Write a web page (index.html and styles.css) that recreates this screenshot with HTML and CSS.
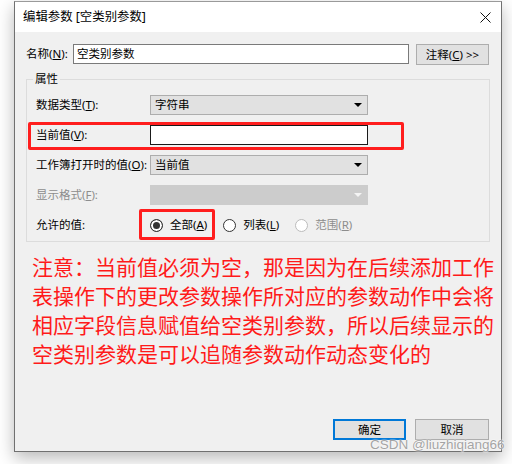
FILE: index.html
```html
<!DOCTYPE html>
<html lang="zh-CN">
<head>
<meta charset="utf-8">
<title>编辑参数</title>
<link rel="stylesheet" href="styles.css">
</head>
<body>
<div class="dialog">
  <div class="titlebar">
    <span class="title">编辑参数 [空类别参数]</span>
    <svg class="close" width="11" height="11" viewBox="0 0 11 11"><path d="M0.5 0.5 L10.5 10.5 M10.5 0.5 L0.5 10.5" stroke="#111" stroke-width="1" fill="none"/></svg>
  </div>
  <div class="body">
    <div class="name-row">
      <span class="name-label">名称(<u>N</u>):</span>
      <div class="textbox name-input">空类别参数</div>
      <button class="btn comment-btn">注释(<u>C</u>) &gt;&gt;</button>
    </div>
    <fieldset class="group">
      <legend>属性</legend>
      <div class="rows">
        <div class="row">
          <span class="lbl">数据类型(<u>T</u>):</span>
          <div class="select"><span>字符串</span><i class="arrow"></i></div>
        </div>
        <div class="row highlight">
          <span class="lbl">当前值(<u>V</u>):</span>
          <div class="textbox value-input"></div>
        </div>
        <div class="row">
          <span class="lbl">工作簿打开时的值(<u>O</u>):</span>
          <div class="select"><span>当前值</span><i class="arrow"></i></div>
        </div>
        <div class="row">
          <span class="lbl disabled">显示格式(<u>F</u>):</span>
          <div class="select disabled"><span></span><i class="arrow"></i></div>
        </div>
        <div class="row">
          <span class="lbl">允许的值:</span>
          <div class="radios">
            <span class="opt opt-all"><i class="radio checked"></i><span>全部(<u>A</u>)</span></span>
            <span class="opt"><i class="radio"></i><span>列表(<u>L</u>)</span></span>
            <span class="opt disabled"><i class="radio"></i><span>范围(<u>R</u>)</span></span>
          </div>
        </div>
      </div>
    </fieldset>
    <p class="note">注意：当前值必须为空，那是因为在后续添加工作<br>表操作下的更改参数操作所对应的参数动作中会将<br>相应字段信息赋值给空类别参数，所以后续显示的<br>空类别参数是可以追随参数动作动态变化的</p>
    <div class="footer">
      <button class="btn ok">确定</button>
      <button class="btn cancel">取消</button>
    </div>
  </div>
</div>
<div class="watermark">CSDN @liuzhiqiang66</div>
</body>
</html>
```
FILE: styles.css
```css
html, body {
  margin: 0;
  padding: 0;
  background: #ffffff;
}
body {
  font-family: "Noto Sans", "Noto Sans CJK SC", sans-serif;
  font-size: 11.5px;
  color: #000;
  line-height: 16px;
  position: relative;
  width: 512px;
  height: 464px;
  overflow: hidden;
}
u {
  text-decoration: underline;
  text-underline-offset: 1px;
}
.dialog {
  width: 486px;
  height: 449px;
  margin: 1px 0 0 14px;
  border: 1px solid #707070;
  border-top-color: #9a9a9a;
  background: #f0f0f0;
  box-shadow: 0 6px 16px rgba(0, 0, 0, 0.28);
  display: flex;
  flex-direction: column;
  overflow: hidden;
}
.titlebar {
  flex: 0 0 30px;
  height: 30px;
  background: #ffffff;
  display: flex;
  align-items: center;
  justify-content: space-between;
  padding: 0 10px 0 8px;
}
.title {
  font-size: 12.4px;
  white-space: nowrap;
}
.close {
  display: block;
  margin-top: 1px;
}
.body {
  flex: 1 1 auto;
  min-height: 0;
  display: flex;
  flex-direction: column;
  padding: 12px 11px 11px 11px;
}
.name-row {
  flex: 0 0 auto;
  display: flex;
  align-items: center;
  height: 20px;
}
.name-label {
  width: 47px;
  white-space: nowrap;
}
.textbox {
  background: #ffffff;
  border: 1px solid #7a7a7a;
  height: 20px;
  box-sizing: border-box;
  padding: 0 3px;
  line-height: 18px;
}
.name-input {
  width: 336px;
}
.btn {
  box-sizing: border-box;
  height: 21px;
  background: #e1e1e1;
  border: 1px solid #adadad;
  font: inherit;
  color: #000;
  padding: 0;
  line-height: 17px;
  white-space: nowrap;
}
.comment-btn {
  width: 73px;
  margin-left: 7px;
}
.group {
  flex: 0 0 auto;
  margin: 7px 0 0;
  padding: 8px 0 6px 9px;
  border: 1px solid #dcdcdc;
  min-width: 0;
}
.group legend {
  padding: 0 2px;
  margin-left: -3px;
  line-height: 16px;
}
.rows {
  display: flex;
  flex-direction: column;
  gap: 10px;
}
.row {
  display: flex;
  align-items: center;
  height: 20px;
  position: relative;
}
.lbl {
  width: 114px;
  flex: 0 0 114px;
  white-space: nowrap;
}
.lbl.disabled {
  color: #8d8d8d;
}
.select {
  width: 218px;
  height: 20px;
  box-sizing: border-box;
  border: 1px solid #adadad;
  background: #e1e1e1;
  display: flex;
  align-items: center;
  justify-content: space-between;
  padding: 0 5px 0 4px;
}
.arrow {
  width: 0;
  height: 0;
  border-left: 4px solid transparent;
  border-right: 4px solid transparent;
  border-top: 4px solid #000;
}
.select.disabled {
  background: #cccccc;
  border-color: #cccccc;
}
.select.disabled .arrow {
  border-top-color: #f4f4f4;
}
.value-input {
  width: 218px;
  border-color: #1a1a1a;
}
.highlight::after {
  content: "";
  position: absolute;
  left: -8px;
  top: -3px;
  width: 376px;
  height: 28px;
  border: 3px solid #ff1e1e;
  border-radius: 2px;
  box-sizing: border-box;
}
.radios {
  display: flex;
  align-items: center;
}
.opt {
  display: flex;
  align-items: center;
  gap: 7px;
  position: relative;
  white-space: nowrap;
}
.opt + .opt {
  margin-left: 16px;
}
.opt.disabled {
  color: #8d8d8d;
}
.opt-all::after {
  content: "";
  position: absolute;
  left: -11px;
  top: -8px;
  width: 76px;
  height: 31px;
  border: 3px solid #ff1e1e;
  border-radius: 2px;
  box-sizing: border-box;
}
.radio {
  display: block;
  width: 13px;
  height: 13px;
  border-radius: 50%;
  border: 1px solid #333;
  background: #ffffff;
  box-sizing: border-box;
}
.radio.checked {
  background: #333;
  box-shadow: inset 0 0 0 2px #ffffff;
}
.opt.disabled .radio {
  border-color: #bcbcbc;
}
.note {
  flex: 0 0 auto;
  margin: 10px 0 0 6px;
  color: #ff1a1a;
  font-family: "Noto Sans CJK SC", sans-serif;
  font-size: 21px;
  line-height: 29px;
  white-space: nowrap;
}
.footer {
  margin-top: auto;
  flex: 0 0 auto;
  display: flex;
  justify-content: flex-end;
  gap: 9px;
  padding-right: 1px;
}
.ok {
  width: 73px;
  border: 2px solid #0078d7;
}
.cancel {
  width: 74px;
}
.watermark {
  position: absolute;
  left: 370px;
  top: 437px;
  font-family: "Liberation Sans", sans-serif;
  font-size: 13.5px;
  line-height: 16px;
  color: #a4a4a4;
  text-shadow: 0 0 2px #fff, 0 0 1px #fff;
}
```
